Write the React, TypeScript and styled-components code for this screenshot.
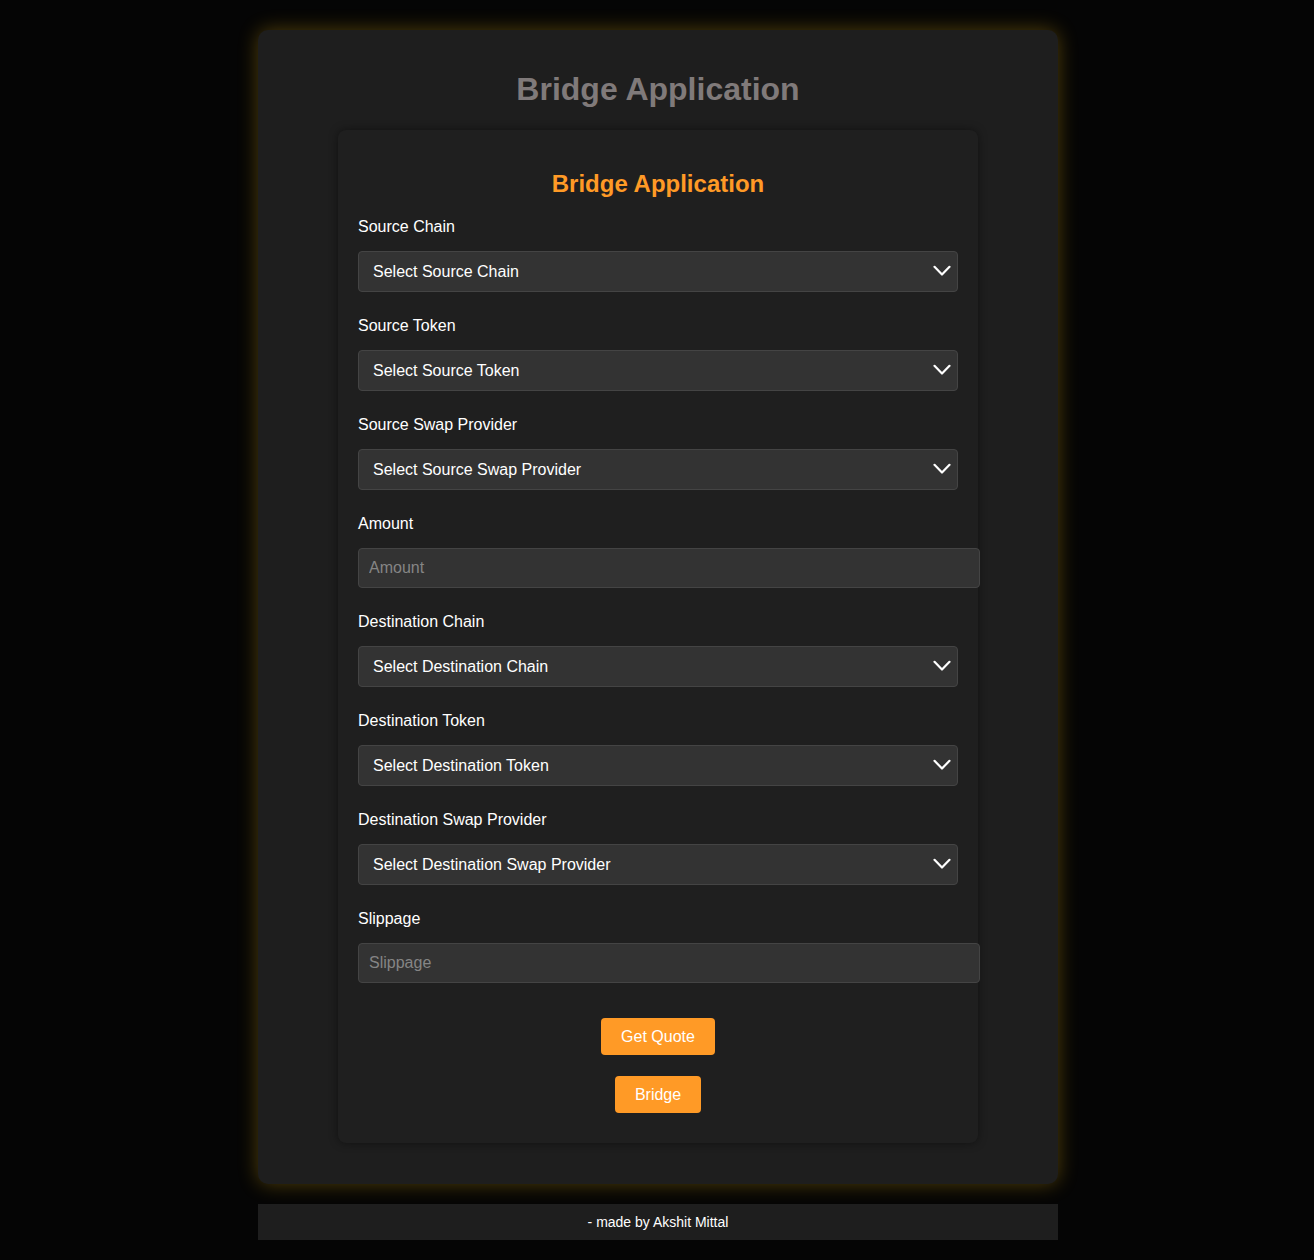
import React from "react";
import styled, { createGlobalStyle } from "styled-components";

const GlobalStyle = createGlobalStyle`
  html, body {
    margin: 0;
    padding: 0;
    background: #050505;
    font-family: "Liberation Sans", Arial, Helvetica, sans-serif;
  }
  * { font-family: "Liberation Sans", Arial, Helvetica, sans-serif; }
`;

const Page = styled.div`
  padding: 30px 0 20px 2px;
`;

const Shell = styled.div`
  box-sizing: border-box;
  width: 800px;
  margin: 0 auto;
  padding: 20px;
  background: #1e1e1e;
  border-radius: 10px;
  box-shadow: 0 0 20px rgba(255, 196, 20, 0.3);
`;

const PageTitle = styled.h1`
  margin: 21.44px 0;
  font-size: 32px;
  font-weight: 700;
  line-height: 36.8px;
  text-align: center;
  color: #807a7a;
`;

const Card = styled.div`
  width: 640px;
  box-sizing: border-box;
  margin: 0 auto 21px;
  padding: 20px;
  background: #1f1f1f;
  border-radius: 8px;
  box-shadow: 0 0 10px rgba(0, 0, 0, 0.45);
`;

const CardTitle = styled.h2`
  margin: 20px 0;
  font-size: 24px;
  font-weight: 700;
  line-height: 27.6px;
  text-align: center;
  color: #ff9a26;
`;

const Field = styled.div<{ $last?: boolean }>`
  margin-bottom: ${(p) => (p.$last ? "0" : "24px")};
`;

const Label = styled.label`
  display: block;
  font-size: 16px;
  line-height: 19px;
  color: #ffffff;
  margin-bottom: 15px;
`;

const SelectWrap = styled.div`
  position: relative;
  width: 600px;
`;

const Select = styled.select`
  appearance: none;
  -webkit-appearance: none;
  box-sizing: border-box;
  display: block;
  width: 100%;
  height: 41px;
  padding: 0 40px 0 14px;
  font-size: 16px;
  color: #ffffff;
  background: #333333;
  border: 1px solid #444444;
  border-radius: 4px;
  outline: none;
`;

const Chevron = styled.svg`
  position: absolute;
  right: 7px;
  top: 14px;
  pointer-events: none;
`;

const Input = styled.input`
  box-sizing: content-box;
  display: block;
  width: 600px;
  height: 18px;
  padding: 10px;
  font-size: 16px;
  color: #ffffff;
  background: #333333;
  border: 1px solid #444444;
  border-radius: 4px;
  outline: none;
  &::placeholder {
    color: #858585;
  }
`;

const Actions = styled.div`
  display: flex;
  flex-direction: column;
  align-items: center;
  gap: 21px;
  margin-top: 35px;
  margin-bottom: 10px;
`;

const Button = styled.button`
  padding: 10px 20px;
  font-size: 16px;
  line-height: 17px;
  color: #ffffff;
  background: #ff9a26;
  border: none;
  border-radius: 4px;
  cursor: pointer;
`;

const Footer = styled.footer`
  box-sizing: border-box;
  width: 800px;
  margin: 20px auto 0;
  padding: 10px;
  background: #1e1e1e;
  color: #ffffff;
  font-size: 14px;
  line-height: 16px;
  text-align: center;
`;

const SelectField = ({ label, placeholder }: { label: string; placeholder: string }) => (
  <Field>
    <Label>{label}</Label>
    <SelectWrap>
      <Select defaultValue="">
        <option value="">{placeholder}</option>
      </Select>
      <Chevron width="18" height="12" viewBox="0 0 18 12">
        <path d="M1.5 1.8 L9 9.5 L16.5 1.8" fill="none" stroke="#ffffff" strokeWidth="2.2" strokeLinecap="round" strokeLinejoin="round" />
      </Chevron>
    </SelectWrap>
  </Field>
);

const InputField = ({ label, placeholder, last }: { label: string; placeholder: string; last?: boolean }) => (
  <Field $last={last}>
    <Label>{label}</Label>
    <Input type="text" placeholder={placeholder} />
  </Field>
);

export default function App() {
  return (
    <>
      <GlobalStyle />
      <Page>
        <Shell>
          <PageTitle>Bridge Application</PageTitle>
          <Card>
            <CardTitle>Bridge Application</CardTitle>
            <SelectField label="Source Chain" placeholder="Select Source Chain" />
            <SelectField label="Source Token" placeholder="Select Source Token" />
            <SelectField label="Source Swap Provider" placeholder="Select Source Swap Provider" />
            <InputField label="Amount" placeholder="Amount" />
            <SelectField label="Destination Chain" placeholder="Select Destination Chain" />
            <SelectField label="Destination Token" placeholder="Select Destination Token" />
            <SelectField label="Destination Swap Provider" placeholder="Select Destination Swap Provider" />
            <InputField label="Slippage" placeholder="Slippage" last />
            <Actions>
              <Button>Get Quote</Button>
              <Button>Bridge</Button>
            </Actions>
          </Card>
        </Shell>
        <Footer>- made by Akshit Mittal</Footer>
      </Page>
    </>
  );
}
